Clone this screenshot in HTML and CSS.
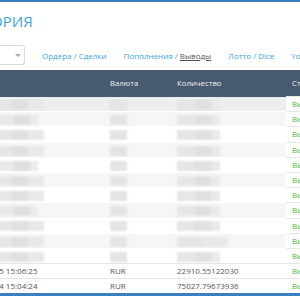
FILE: index.html
```html
<!DOCTYPE html>
<html lang="ru">
<head>
  <meta charset="UTF-8" />
  <meta name="viewport" content="width=device-width, initial-scale=1" />
  <title>История</title>
  <link rel="stylesheet" href="styles.css">
</head>
<body>
  <div class="topbar"></div>
  <div class="page">
    <h1 class="title">ИСТОРИЯ</h1>
    <div class="toolbar">
      <div class="select"><span class="caret"></span></div>
      <nav class="tabs">
        <span class="tab"><a href="#">Ордера</a> / <a href="#">Сделки</a></span>
        <span class="tab"><a href="#">Пополнения</a> / <a href="#" class="active">Выводы</a></span>
        <span class="tab"><a href="#">Лотто</a> / <a href="#">Dice</a></span>
        <span class="tab"><a href="#">YoBit Codes</a></span>
      </nav>
    </div>
    <table class="history">
      <colgroup>
        <col class="c-date"><col class="c-cur"><col class="c-amount"><col class="c-status">
      </colgroup>
      <thead>
        <tr><th>Дата</th><th>Валюта</th><th>Количество</th><th>Статус</th></tr>
      </thead>
      <tbody>
        <tr class="hidden first"><td><span class="blur w1"></span></td><td><span class="blur cur"></span></td><td><span class="blur w3"></span></td><td class="status">Выполнено</td></tr>
        <tr class="hidden"><td><span class="blur w2"></span></td><td><span class="blur cur"></span></td><td><span class="blur w3"></span></td><td class="status">Выполнено</td></tr>
        <tr class="hidden"><td><span class="blur w1"></span></td><td><span class="blur cur"></span></td><td><span class="blur w3"></span></td><td class="status">Выполнено</td></tr>
        <tr class="hidden"><td><span class="blur w1"></span></td><td><span class="blur cur"></span></td><td><span class="blur w3"></span></td><td class="status">Выполнено</td></tr>
        <tr class="hidden"><td><span class="blur w2"></span></td><td><span class="blur cur"></span></td><td><span class="blur w3"></span></td><td class="status">Выполнено</td></tr>
        <tr class="hidden"><td><span class="blur w1"></span></td><td><span class="blur cur"></span></td><td><span class="blur w3"></span></td><td class="status">Выполнено</td></tr>
        <tr class="hidden"><td><span class="blur w1"></span></td><td><span class="blur cur"></span></td><td><span class="blur w3"></span></td><td class="status">Выполнено</td></tr>
        <tr class="hidden"><td><span class="blur w2"></span></td><td><span class="blur cur"></span></td><td><span class="blur w3"></span></td><td class="status">Выполнено</td></tr>
        <tr class="hidden"><td><span class="blur w1"></span></td><td><span class="blur cur"></span></td><td><span class="blur w3"></span></td><td class="status">Выполнено</td></tr>
        <tr class="hidden"><td><span class="blur w1"></span></td><td><span class="blur cur"></span></td><td><span class="blur w4"></span></td><td class="status">Выполнено</td></tr>
        <tr class="hidden"><td><span class="blur w1"></span></td><td><span class="blur cur"></span></td><td><span class="blur w3"></span></td><td class="status">Выполнено</td></tr>
        <tr><td>2017-03-15 15:06:25</td><td>RUR</td><td>22910.55122030</td><td class="status">Выполнено</td></tr>
        <tr><td>2017-03-14 15:04:24</td><td>RUR</td><td>75027.79673936</td><td class="status">Выполнено</td></tr>
      </tbody>
    </table>
  </div>
  <div class="bottombar"></div>
</body>
</html>
```

FILE: styles.css
```css
body {
  margin: 0;
  font-family: 'Open Sans', 'Liberation Sans', sans-serif;
  background: #fff;
  color: #555;
  overflow: hidden;
  width: 300px;
  height: 300px;
}
.topbar {
  height: 2px;
  background: #3a7fc1;
}
.page {
  margin-left: -50px;
  width: 460px;
}
.title {
  margin: 0;
  padding: 8px 0 0 12px;
  height: 27px;
  font-size: 15px;
  font-weight: 400;
  line-height: 23px;
  color: #3ca3de;
}
.toolbar {
  display: flex;
  align-items: center;
  gap: 17px;
  height: 20px;
  margin-top: 8px;
}
.select {
  box-sizing: border-box;
  width: 75px;
  height: 20px;
  border: 1px solid #d9d9d9;
  border-radius: 3px;
  display: flex;
  align-items: center;
  justify-content: flex-end;
  padding-right: 3px;
}
.caret {
  width: 0;
  height: 0;
  border-left: 3px solid transparent;
  border-right: 3px solid transparent;
  border-top: 3px solid #aaa;
}
.tabs {
  display: flex;
  gap: 17px;
  font-size: 8px;
  color: #3ca3de;
  white-space: nowrap;
}
.tabs a {
  color: #3ca3de;
  text-decoration: none;
}
.tabs a.active {
  color: #555;
  text-decoration: underline;
}
.history {
  margin-top: 5px;
  border-collapse: collapse;
  table-layout: fixed;
  width: 460px;
  font-size: 8px;
}
.c-date { width: 154px; }
.c-cur { width: 67px; }
.c-amount { width: 115px; }
.c-status { width: 124px; }
.history th {
  background: #475a6f;
  color: #eef2f6;
  font-weight: 400;
  font-size: 7.8px;
  text-align: left;
  height: 26px;
  padding: 0 6px;
}
.history td {
  height: 14.2px;
  padding: 0 6px;
  line-height: 14px;
  border-top: 1px solid #e6e6e6;
  white-space: nowrap;
  overflow: hidden;
  color: #555;
}
.history td:first-child {
  padding-left: 12px;
}
.history tr.hidden td {
  border-top-color: transparent;
}
.history tr.hidden:nth-child(even) td {
  background: #f6f6f6;
}
.history tr.first td {
  background: #eceef0;
}
.history td.status,
.history tr.hidden td.status,
.history tr.first td.status {
  background: #fff;
  color: #4cb848;
  border-top: 1px solid #e6e6e6;
  padding-left: 6px;
}
.blur {
  display: inline-block;
  height: 10px;
  vertical-align: middle;
  filter: blur(1px);
}
.w1 {
  width: 82px;
  background: linear-gradient(90deg, #e6e6e6 0 50px, #e0e0e0 50px 66px, #e8e8e8 66px);
}
.w2 {
  width: 76px;
  background: linear-gradient(90deg, #e8e8e8 0 52px, #dfdfdf 52px 68px, #ebebeb 68px);
}
.cur {
  width: 17px;
  background: #e4e4e4;
}
.w3 {
  width: 43px;
  background: linear-gradient(90deg, #e6e6e6 0 18px, #e0e0e0 18px 34px, #e9e9e9 34px);
}
.w4 {
  width: 51px;
  background: linear-gradient(90deg, #e4e4e4 0 26px, #e8e8e8 26px);
}
.bottombar {
  height: 3px;
  background: #3a7fc1;
}
```
